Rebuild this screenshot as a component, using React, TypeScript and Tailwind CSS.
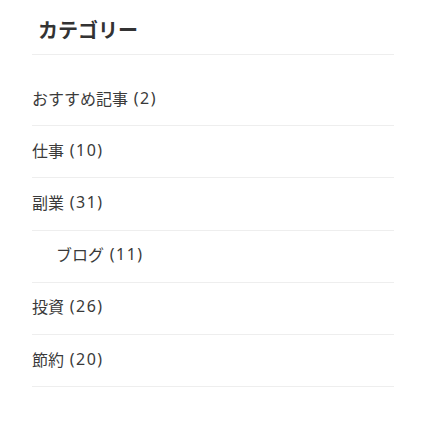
const categories: [string, number, boolean][] = [
  ['おすすめ記事', 2, false],
  ['仕事', 10, false],
  ['副業', 31, false],
  ['ブログ', 11, true],
  ['投資', 26, false],
  ['節約', 20, false],
]

export default function App() {
  return (
    <div
      className="min-h-[426px] w-[447px] bg-white text-[#333]"
      style={{ fontFamily: '"Noto Sans", "Noto Sans CJK JP", sans-serif' }}
    >
      <div className="ml-8 w-[362px] pt-[17px]">
        <h3 className="border-b border-[#eee] pb-[9px] pl-[6px] text-[20px] font-bold leading-[28px]">
          カテゴリー
        </h3>
        <ul className="mt-[19px] text-[#3a3a3a]">
          {categories.map(([name, count, child]) => (
            <li
              key={name}
              className={`flex h-[52.2px] items-center border-b border-[#eee] pb-1 text-[16px] ${child ? 'pl-6' : ''}`}
            >
              <span style={{ fontFamily: '"Noto Sans CJK JP", sans-serif' }}>{name}</span>
              <span className="whitespace-pre tracking-[1.5px]"> ({count})</span>
            </li>
          ))}
        </ul>
      </div>
    </div>
  )
}
